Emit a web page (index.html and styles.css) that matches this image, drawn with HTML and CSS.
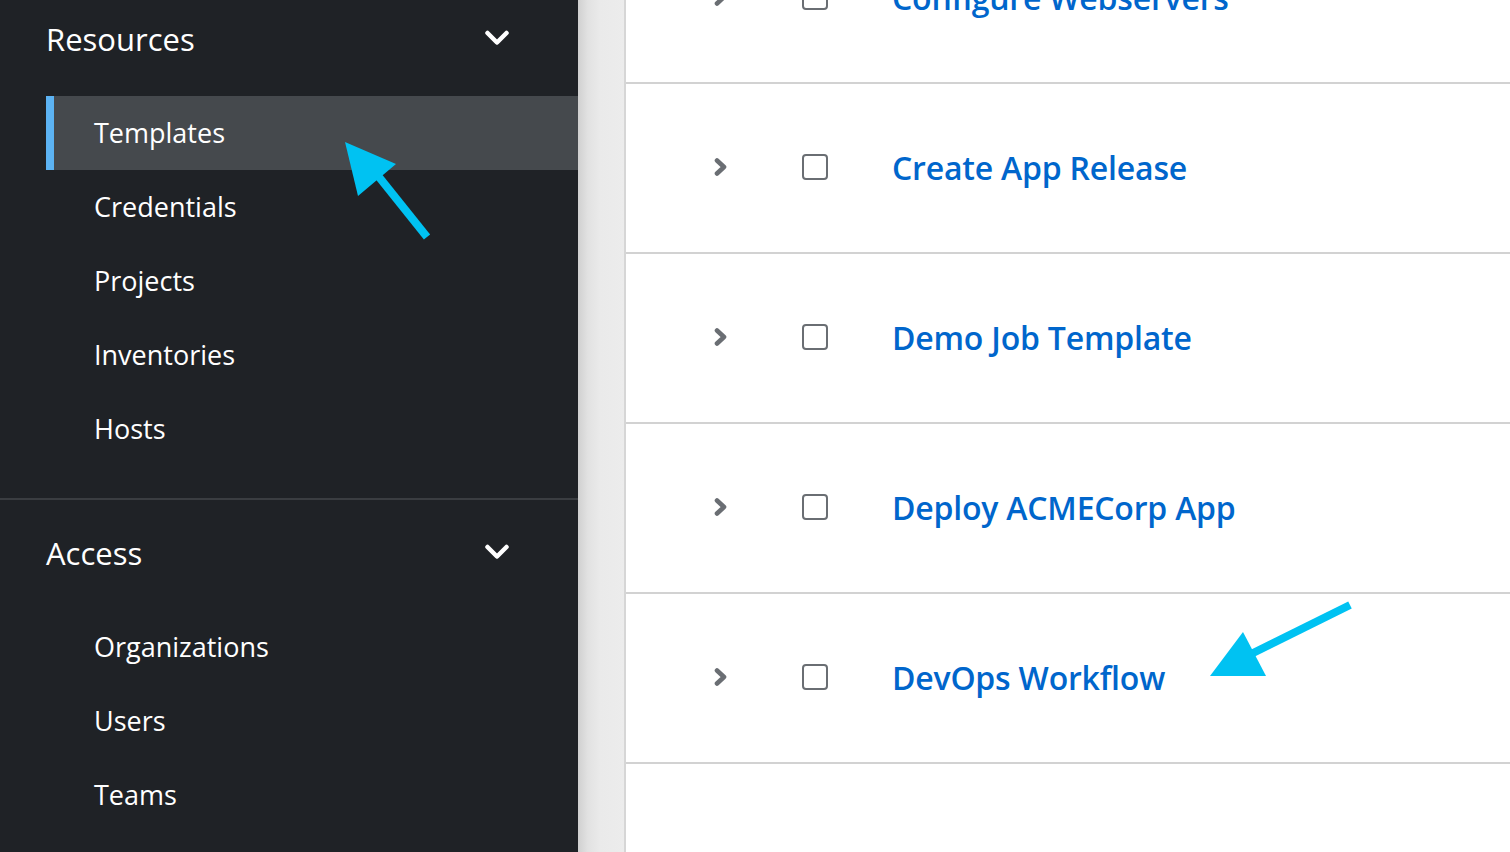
FILE: index.html
```html
<!DOCTYPE html>
<html>
<head>
<meta charset="utf-8">
<link rel="stylesheet" href="styles.css">
</head>
<body>
<div class="page">
  <nav class="sidebar">
    <div class="scroller">
      <section class="nav-section">
        <div class="nav-header">
          <span class="nav-title">Resources</span>
          <svg class="caret" width="24" height="16" viewBox="0 0 24 16"><path d="M2.5 3 L12 12.5 L21.5 3" fill="none" stroke="#fff" stroke-width="4.5" stroke-linecap="round" stroke-linejoin="round"/></svg>
        </div>
        <ul class="nav-list">
          <li class="nav-item active">Templates</li>
          <li class="nav-item">Credentials</li>
          <li class="nav-item">Projects</li>
          <li class="nav-item">Inventories</li>
          <li class="nav-item">Hosts</li>
        </ul>
      </section>
      <section class="nav-section">
        <div class="nav-header">
          <span class="nav-title">Access</span>
          <svg class="caret" width="24" height="16" viewBox="0 0 24 16"><path d="M2.5 3 L12 12.5 L21.5 3" fill="none" stroke="#fff" stroke-width="4.5" stroke-linecap="round" stroke-linejoin="round"/></svg>
        </div>
        <ul class="nav-list">
          <li class="nav-item">Organizations</li>
          <li class="nav-item">Users</li>
          <li class="nav-item">Teams</li>
        </ul>
      </section>
    </div>
  </nav>
  <div class="gutter"></div>
  <main class="content">
    <div class="rows">
      <div class="row">
        <svg class="toggle" width="14" height="18" viewBox="0 0 14 18"><path d="M3 2.5 L10 9 L3 15.5" fill="none" stroke="#6a6e73" stroke-width="4.6" stroke-linecap="round" stroke-linejoin="round"/></svg>
        <span class="check"></span>
        <a class="name">Configure Webservers</a>
      </div>
      <div class="row">
        <svg class="toggle" width="14" height="18" viewBox="0 0 14 18"><path d="M3 2.5 L10 9 L3 15.5" fill="none" stroke="#6a6e73" stroke-width="4.6" stroke-linecap="round" stroke-linejoin="round"/></svg>
        <span class="check"></span>
        <a class="name">Create App Release</a>
      </div>
      <div class="row">
        <svg class="toggle" width="14" height="18" viewBox="0 0 14 18"><path d="M3 2.5 L10 9 L3 15.5" fill="none" stroke="#6a6e73" stroke-width="4.6" stroke-linecap="round" stroke-linejoin="round"/></svg>
        <span class="check"></span>
        <a class="name">Demo Job Template</a>
      </div>
      <div class="row">
        <svg class="toggle" width="14" height="18" viewBox="0 0 14 18"><path d="M3 2.5 L10 9 L3 15.5" fill="none" stroke="#6a6e73" stroke-width="4.6" stroke-linecap="round" stroke-linejoin="round"/></svg>
        <span class="check"></span>
        <a class="name">Deploy ACMECorp App</a>
      </div>
      <div class="row">
        <svg class="toggle" width="14" height="18" viewBox="0 0 14 18"><path d="M3 2.5 L10 9 L3 15.5" fill="none" stroke="#6a6e73" stroke-width="4.6" stroke-linecap="round" stroke-linejoin="round"/></svg>
        <span class="check"></span>
        <a class="name">DevOps Workflow</a>
      </div>
    </div>
  </main>
</div>
<svg class="annotations" width="1510" height="852" viewBox="0 0 1510 852">
  <g fill="#00c2f2" stroke="none">
    <line x1="427" y1="237" x2="375" y2="172" stroke="#00c2f2" stroke-width="8"/>
    <polygon points="345,142 396,164 358,196"/>
    <line x1="1350" y1="605" x2="1245" y2="657" stroke="#00c2f2" stroke-width="8"/>
    <polygon points="1210,676 1243,632 1266,676"/>
  </g>
</svg>
</body>
</html>
```
FILE: styles.css
```css
html, body {
  margin: 0;
  padding: 0;
  width: 1510px;
  height: 852px;
  overflow: hidden;
  font-family: "Open Sans", "Noto Sans", sans-serif;
  background: #fff;
}

.page {
  display: flex;
  height: 852px;
  position: relative;
}

.sidebar {
  width: 578px;
  flex: none;
  background: #1f2226;
  overflow: hidden;
  color: #fff;
}

.scroller {
  margin-top: -14px;
}

.nav-section {
  padding-bottom: 32px;
  border-bottom: 2px solid #3a3d41;
}

.nav-header {
  display: flex;
  align-items: center;
  justify-content: space-between;
  height: 42px;
  padding: 32px 69px 2px 46px;
}

.nav-title {
  font-size: 31px;
  font-weight: 400;
  letter-spacing: 0;
}

.caret {
  display: block;
  margin-top: -2px;
}

.nav-list {
  list-style: none;
  margin: 34px 0 0 46px;
  padding: 0;
}

.nav-item {
  box-sizing: border-box;
  height: 74px;
  display: flex;
  align-items: center;
  padding-left: 48px;
  padding-bottom: 2px;
  font-size: 27px;
  letter-spacing: 0;
}

.nav-item.active {
  background: #45494d;
  border-left: 8px solid #5cb3f3;
  padding-left: 40px;
}

.gutter {
  width: 46px;
  flex: none;
  background: linear-gradient(to right, #d0d0d0 0px, #e2e2e2 10px, #eaeaea 22px, #ececec 46px);
  border-right: 2px solid #d6d6d6;
}

.content {
  flex: 1;
  background: #fff;
  overflow: hidden;
}

.rows {
  margin-top: -86px;
}

.row {
  height: 166px;
  padding-bottom: 2px;
  border-bottom: 2px solid #d2d2d2;
  display: flex;
  align-items: center;
}

.toggle {
  margin-left: 88px;
  flex: none;
}

.check {
  width: 22px;
  height: 22px;
  border: 2px solid #6a6e73;
  border-radius: 4px;
  margin-left: 74px;
  flex: none;
}

.name {
  margin-left: 64px;
  color: #0066cc;
  font-size: 32px;
  font-weight: 600;
  letter-spacing: -0.2px;
}

.annotations {
  position: absolute;
  left: 0;
  top: 0;
  pointer-events: none;
}
```
